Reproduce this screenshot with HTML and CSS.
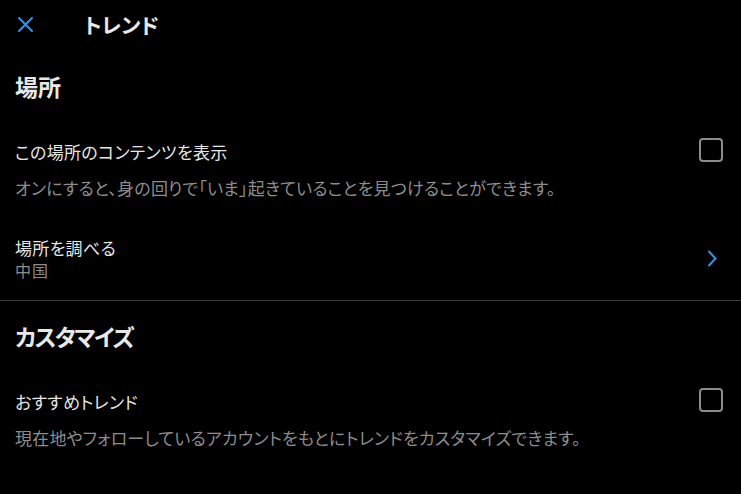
FILE: index.html
```html
<!DOCTYPE html>
<html lang="ja">
<head>
<meta charset="utf-8">
<title>トレンド</title>
<link rel="stylesheet" href="styles.css">
</head>
<body>
<div class="page">
  <header class="header">
    <svg class="close" viewBox="0 0 15 15" width="15" height="15" aria-hidden="true">
      <path d="M1 1 L14 14 M14 1 L1 14" stroke="#3d8fd9" stroke-width="2" stroke-linecap="round" fill="none"/>
    </svg>
    <h1 class="header-title">トレンド</h1>
  </header>

  <section class="section">
    <h2 class="section-title">場所</h2>
    <div class="row row-toggle">
      <div class="row-text">
        <div class="row-title">この場所のコンテンツを表示</div>
        <div class="row-desc">オンにすると、身の回りで「いま」起きていることを見つけることができます。</div>
      </div>
      <span class="checkbox"></span>
    </div>
    <div class="row row-link">
      <div class="row-text">
        <div class="row-title tight">場所を調べる</div>
        <div class="row-value">中国</div>
      </div>
      <svg class="chevron" viewBox="0 0 10 17" width="10" height="17" aria-hidden="true">
        <polyline points="2,1.5 8.5,8.5 2,15.5" stroke="#3d8fd9" stroke-width="2" fill="none" stroke-linecap="round" stroke-linejoin="round"/>
      </svg>
    </div>
  </section>

  <div class="separator"></div>

  <section class="section">
    <h2 class="section-title second">カスタマイズ</h2>
    <div class="row row-toggle">
      <div class="row-text">
        <div class="row-title">おすすめトレンド</div>
        <div class="row-desc">現在地やフォローしているアカウントをもとにトレンドをカスタマイズできます。</div>
      </div>
      <span class="checkbox"></span>
    </div>
  </section>
</div>
</body>
</html>
```

FILE: styles.css
```css
html, body {
  margin: 0;
  padding: 0;
  background: #000;
}

body {
  font-family: "Noto Sans CJK JP", "Noto Sans", sans-serif;
  color: #e6e6e6;
  width: 741px;
  height: 494px;
  overflow: hidden;
}

.header {
  height: 48px;
  display: flex;
  align-items: center;
  padding-left: 18px;
}

.close {
  flex: none;
  margin-right: 51px;
  margin-top: 1px;
}

.header-title {
  margin: 0;
  font-size: 21px;
  font-weight: 700;
  line-height: 30px;
  font-feature-settings: "palt";
  color: #e8e8e8;
}

.section {
  padding: 0 18px 0 15px;
}

.section-title {
  margin: 23px 0 0 0;
  font-size: 23px;
  font-weight: 700;
  line-height: 30px;
  color: #e8e8e8;
  font-feature-settings: "palt";
}

.section-title.second {
  margin-top: 20px;
  letter-spacing: -1.5px;
}

.row {
  display: flex;
  justify-content: space-between;
}

.row-toggle {
  margin-top: 39px;
  align-items: flex-start;
}

.row-link {
  margin-top: 37px;
  align-items: center;
}

.row-title {
  font-size: 17px;
  line-height: 24px;
  color: #e6e6e6;
  font-feature-settings: "palt";
  letter-spacing: 0.3px;
}

.row-title.tight {
  line-height: 22px;
}

.row-desc {
  margin-top: 12px;
  font-size: 17px;
  line-height: 24px;
  color: #8d8d8d;
  font-feature-settings: "palt";
  letter-spacing: 0.2px;
}

.row-value {
  font-size: 16px;
  line-height: 22px;
  color: #8d8d8d;
  letter-spacing: 1px;
}

.checkbox {
  flex: none;
  width: 20px;
  height: 20px;
  border: 2px solid #8c8c8c;
  border-radius: 4px;
  margin-top: -2px;
}

.chevron {
  flex: none;
  margin-right: 6px;
  margin-top: -2px;
}

.separator {
  height: 1px;
  background: #3c3c3c;
  margin-top: 19px;
}
```
